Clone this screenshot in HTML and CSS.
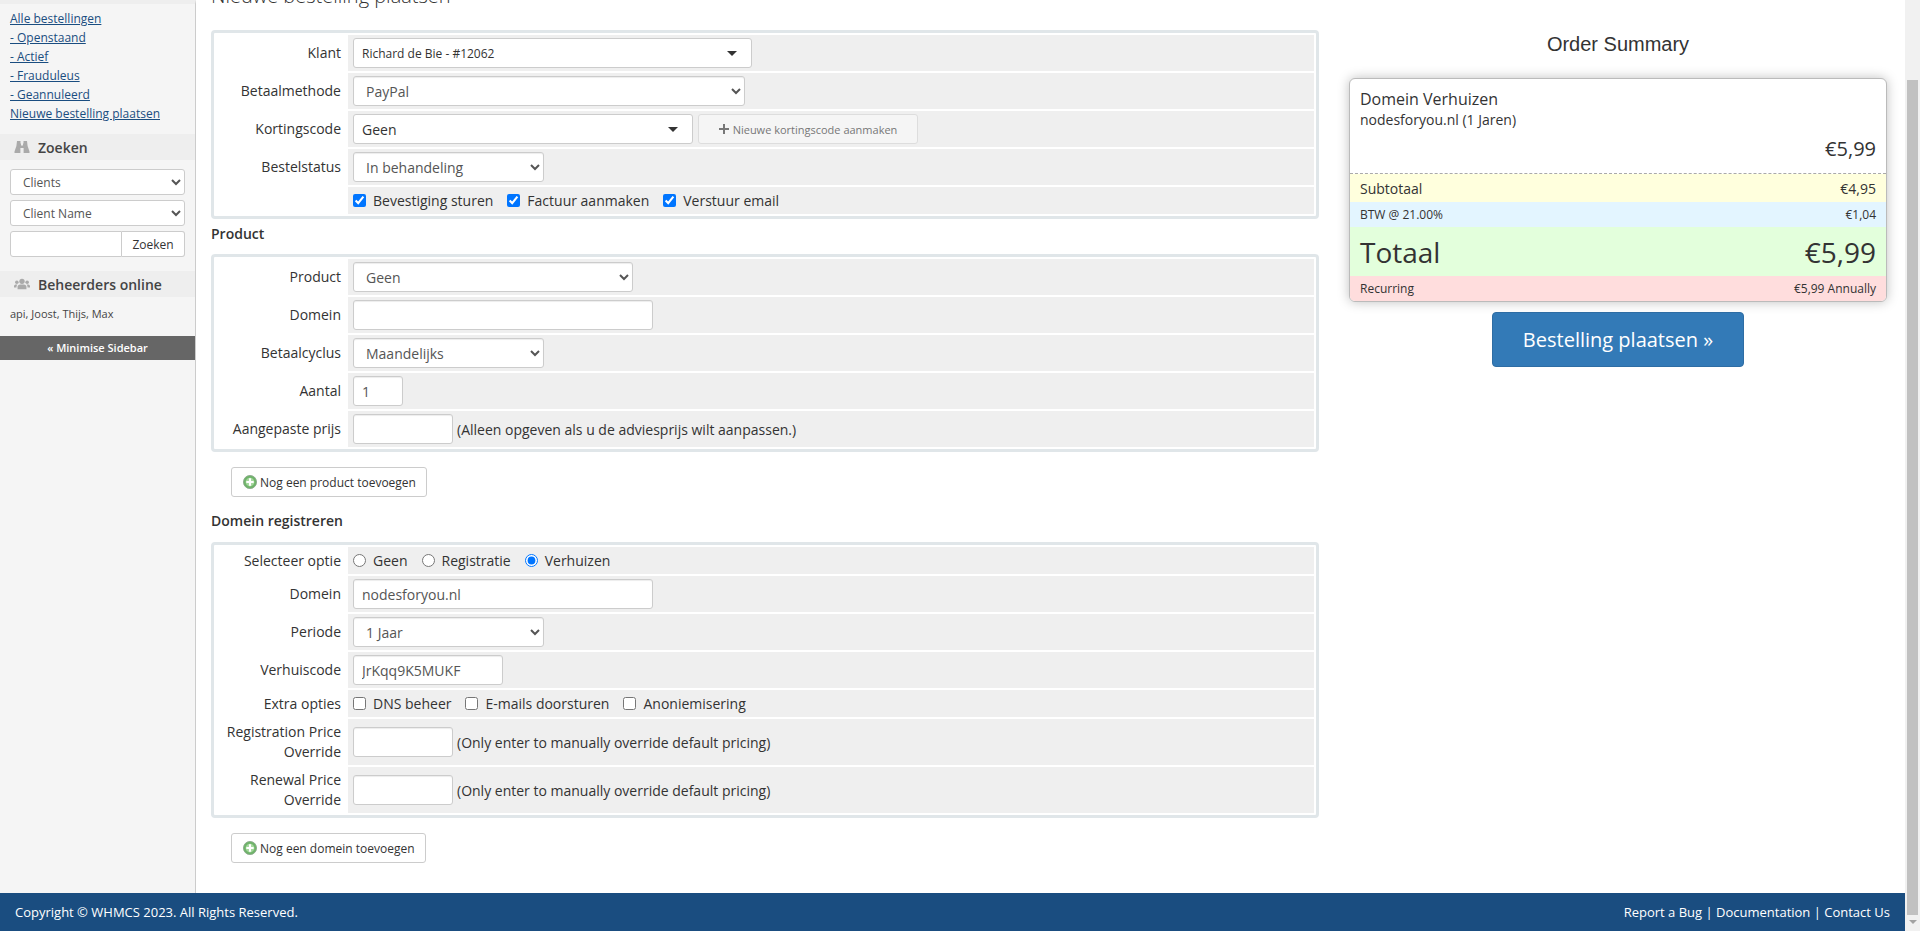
FILE: index.html
```html
<!DOCTYPE html>
<html lang="nl">
<head>
<meta charset="utf-8">
<title>Nieuwe bestelling plaatsen</title>
<link rel="stylesheet" href="styles.css">
</head>
<body>
<div class="window">
  <div class="viewport">
    <div class="columns">
      <aside class="sidebar">
        <ul class="menu">
          <li><a href="#">Alle bestellingen</a></li>
          <li><a href="#">- Openstaand</a></li>
          <li><a href="#">- Actief</a></li>
          <li><a href="#">- Frauduleus</a></li>
          <li><a href="#">- Geannuleerd</a></li>
          <li><a href="#">Nieuwe bestelling plaatsen</a></li>
        </ul>
        <div class="side-head search-head">
          <svg class="side-icon" viewBox="0 0 16 14"><path fill="#aaa" d="M3 1h3.5v2.5H7v2h2v-2h.5V1H13l.6 5 1.9 5.5V13H9.6V8H6.4v5H.5v-1.500L2.400 6z"/></svg>
          <span>Zoeken</span>
        </div>
        <div class="search-form">
          <select class="side-select"><option>Clients</option></select>
          <select class="side-select"><option>Client Name</option></select>
          <div class="search-group">
            <input class="search-input" type="text">
            <button class="search-button" type="button">Zoeken</button>
          </div>
        </div>
        <div class="side-head">
          <svg class="side-icon" viewBox="0 0 18 14"><g fill="#aaa"><circle cx="9" cy="4" r="3"/><path d="M4 13V10c0-1.800 1.500-2.500 5-2.500s5 .7 5 2.500v3z"/><circle cx="3.200" cy="5" r="2"/><circle cx="14.800" cy="5" r="2"/><path d="M0 11V9.500C0 8 1 7.500 3 7.500c.4 0 .7 0 1 .1C3 8.200 2.800 9.500 2.800 11zM18 11V9.500C18 8 17 7.500 15 7.500c-.4 0-.7 0-1 .1 1 .6 1.200 1.900 1.200 3.400z"/></g></svg>
          <span>Beheerders online</span>
        </div>
        <p class="online">api, Joost, Thijs, Max</p>
        <div class="minimise">« Minimise Sidebar</div>
      </aside>

      <main class="content">
        <div class="form-col">
          <h1 class="page-title">Nieuwe bestelling plaatsen</h1>

          <div class="form-table">
            <div class="row">
              <div class="label">Klant</div>
              <div class="field"><div class="fake-select klant"><span>Richard de Bie - #12062</span><i class="caret"></i></div></div>
            </div>
            <div class="row">
              <div class="label">Betaalmethode</div>
              <div class="field"><select class="control w392"><option>PayPal</option></select></div>
            </div>
            <div class="row">
              <div class="label">Kortingscode</div>
              <div class="field">
                <div class="fake-select korting"><span>Geen</span><i class="caret"></i></div>
                <button class="new-code" type="button"><svg class="plus" viewBox="0 0 10 10"><path fill="#777" d="M4 0h2v4h4v2H6v4H4V6H0V4h4z"/></svg>Nieuwe kortingscode aanmaken</button>
              </div>
            </div>
            <div class="row">
              <div class="label">Bestelstatus</div>
              <div class="field"><select class="control w191"><option>In behandeling</option></select></div>
            </div>
            <div class="row short">
              <div class="label"></div>
              <div class="field options">
                <label><input type="checkbox" checked>Bevestiging sturen</label>
                <label><input type="checkbox" checked>Factuur aanmaken</label>
                <label><input type="checkbox" checked>Verstuur email</label>
              </div>
            </div>
          </div>

          <h2 class="section product-title">Product</h2>
          <div class="form-table">
            <div class="row">
              <div class="label">Product</div>
              <div class="field"><select class="control w280"><option>Geen</option></select></div>
            </div>
            <div class="row">
              <div class="label">Domein</div>
              <div class="field"><input class="control w300" type="text"></div>
            </div>
            <div class="row">
              <div class="label">Betaalcyclus</div>
              <div class="field"><select class="control w191"><option>Maandelijks</option></select></div>
            </div>
            <div class="row">
              <div class="label">Aantal</div>
              <div class="field"><input class="control w50" type="text" value="1"></div>
            </div>
            <div class="row">
              <div class="label">Aangepaste prijs</div>
              <div class="field"><input class="control w100" type="text"><span class="hint">(Alleen opgeven als u de adviesprijs wilt aanpassen.)</span></div>
            </div>
          </div>

          <button class="add-button" type="button"><svg class="add-icon" viewBox="0 0 16 16"><circle cx="8" cy="8" r="7.500" fill="#6fb46a" stroke="#8aa88a"/><circle cx="8" cy="8" r="5" fill="#a5d79d"/><path fill="#fff" d="M6.800 3.800h2.400v3h3v2.400h-3v3H6.800v-3h-3V6.800h3z"/></svg>Nog een product toevoegen</button>

          <h2 class="section domain-title">Domein registreren</h2>
          <div class="form-table">
            <div class="row short">
              <div class="label">Selecteer optie</div>
              <div class="field options">
                <label><input type="radio" name="opt">Geen</label>
                <label><input type="radio" name="opt">Registratie</label>
                <label><input type="radio" name="opt" checked>Verhuizen</label>
              </div>
            </div>
            <div class="row">
              <div class="label">Domein</div>
              <div class="field"><input class="control w300" type="text" value="nodesforyou.nl"></div>
            </div>
            <div class="row">
              <div class="label">Periode</div>
              <div class="field"><select class="control w191"><option>1 Jaar</option></select></div>
            </div>
            <div class="row">
              <div class="label">Verhuiscode</div>
              <div class="field"><input class="control w150" type="text" value="JrKqq9K5MUKF"></div>
            </div>
            <div class="row short">
              <div class="label">Extra opties</div>
              <div class="field options">
                <label><input type="checkbox">DNS beheer</label>
                <label><input type="checkbox">E-mails doorsturen</label>
                <label><input type="checkbox">Anoniemisering</label>
              </div>
            </div>
            <div class="row tall">
              <div class="label">Registration Price Override</div>
              <div class="field"><input class="control w100" type="text"><span class="hint">(Only enter to manually override default pricing)</span></div>
            </div>
            <div class="row tall">
              <div class="label">Renewal Price Override</div>
              <div class="field"><input class="control w100" type="text"><span class="hint">(Only enter to manually override default pricing)</span></div>
            </div>
          </div>

          <button class="add-button" type="button"><svg class="add-icon" viewBox="0 0 16 16"><circle cx="8" cy="8" r="7.500" fill="#6fb46a" stroke="#8aa88a"/><circle cx="8" cy="8" r="5" fill="#a5d79d"/><path fill="#fff" d="M6.800 3.800h2.400v3h3v2.400h-3v3H6.800v-3h-3V6.800h3z"/></svg>Nog een domein toevoegen</button>
        </div>

        <div class="summary-col">
          <h2 class="summary-title">Order Summary</h2>
          <div class="summary">
            <div class="sum-item">
              <div class="sum-name">Domein Verhuizen</div>
              <div class="sum-desc">nodesforyou.nl (1 Jaren)</div>
              <div class="sum-price">€5,99</div>
            </div>
            <div class="sum-row subtotal"><span>Subtotaal</span><span>€4,95</span></div>
            <div class="sum-row tax"><span>BTW @ 21.00%</span><span>€1,04</span></div>
            <div class="sum-row total"><span>Totaal</span><span>€5,99</span></div>
            <div class="sum-row recurring"><span>Recurring</span><span>€5,99 Annually</span></div>
          </div>
          <button class="submit" type="button">Bestelling plaatsen »</button>
        </div>
      </main>
    </div>
    <footer class="footer">
      <span>Copyright © WHMCS 2023. All Rights Reserved.</span>
      <span class="foot-links"><a href="#">Report a Bug</a> | <a href="#">Documentation</a> | <a href="#">Contact Us</a></span>
    </footer>
  </div>
  <div class="scrollbar">
    <div class="thumb"></div>
    <i class="arrow-down"></i>
  </div>
</div>
</body>
</html>
```
FILE: styles.css
```css
* { box-sizing: border-box; }
html, body { margin: 0; height: 100%; overflow: hidden; }
body { font-family: "Open Sans", sans-serif; font-size: 14px; color: #333; background: #fff; }
.window { display: flex; height: 931px; }
.viewport { flex: 1; min-width: 0; display: flex; flex-direction: column; }
.columns { flex: 1; min-height: 0; display: flex; overflow: hidden; }

/* sidebar */
.sidebar { width: 196px; flex: none; background: #f5f5f5; border-right: 1px solid #ccc; border-top: 4px solid #eee; }
.menu { list-style: none; margin: 0; padding: 5px 10px 0; font-size: 12px; line-height: 19px; }
.menu a { color: #1a4d80; }
.side-head { height: 26px; margin-top: 11px; background: #eee; display: flex; align-items: center; padding-left: 14px; gap: 8px; font-size: 14px; font-weight: 600; color: #444; }
.side-head + .online { margin-top: 8px; }
.side-icon { width: 16px; height: 14px; flex: none; }
.search-form { padding: 9px 10px 14px; display: flex; flex-direction: column; gap: 5px; margin-bottom: -11px; }
.side-select { width: 175px; height: 26px; font: 12px "Open Sans", sans-serif; color: #555; background: #fff; border: 1px solid #ccc; border-radius: 3px; padding: 0 8px; }
.search-group { display: flex; height: 26px; }
.search-input { width: 112px; border: 1px solid #ccc; border-radius: 3px 0 0 3px; background: #fff; }
.search-button { width: 63px; border: 1px solid #ccc; border-left: 0; border-radius: 0 3px 3px 0; background: #fff; font: 12px "Open Sans", sans-serif; color: #333; padding: 0; }
.online { margin: 0; padding: 0 10px; font-size: 11px; line-height: 18px; color: #444; }
.minimise { margin-top: 13px; height: 24px; background: #666; color: #fff; font-size: 11px; font-weight: 600; line-height: 24px; text-align: center; }

/* main */
.content { flex: 1; min-width: 0; display: flex; padding-left: 15px; }
.form-col { width: 1108px; flex: none; margin-top: -19px; }
.page-title { margin: 0 0 20px; font-size: 20px; font-weight: 300; line-height: 29px; color: #333; }
.section { margin: 0; font-size: 14px; font-weight: 600; line-height: 19px; color: #333; }
.product-title { padding: 5px 0 11px; }
.domain-title { padding: 14px 0 12px; }

.form-table { border: 3px solid #e0e6e9; border-radius: 4px; padding: 2px; display: flex; flex-direction: column; gap: 2px; }
.row { display: flex; gap: 2px; height: 36px; }
.row.short { height: 27px; }
.row.tall { height: 46px; }
.label { width: 130px; flex: none; padding: 0 5px 0 0; text-align: right; align-self: center; line-height: 20px; color: #333; }
.field { flex: 1; min-width: 0; background: #efefef; padding: 0 5px; display: flex; align-items: center; }

.control { height: 30px; font: 14px "Open Sans", sans-serif; color: #555; background: #fff; border: 1px solid #ccc; border-radius: 3px; box-shadow: inset 0 1px 1px rgba(0,0,0,.075); padding: 0 8px; }
select.control { padding: 0 8px; }
.w392 { width: 392px; }
.w191 { width: 191px; }
.w280 { width: 280px; }
.w300 { width: 300px; }
.w50 { width: 50px; }
.w100 { width: 100px; }
.w150 { width: 150px; }
.fake-select { height: 30px; background: #fff; border: 1px solid #ccc; border-radius: 3px; display: flex; align-items: center; justify-content: space-between; padding: 0 14px 0 8px; color: #333; }
.fake-select.klant { width: 399px; font-size: 12px; }
.fake-select.korting { width: 340px; }
.caret { width: 0; height: 0; border: 5px solid transparent; border-top: 5px solid #333; border-bottom: 0; }
.new-code { margin-left: 5px; width: 220px; height: 30px; background: #f5f5f5; border: 1px solid #ddd; border-radius: 3px; font: 11px "Open Sans", sans-serif; color: #777; padding: 0; display: flex; align-items: center; justify-content: center; gap: 4px; }
.plus { width: 10px; height: 10px; }
.hint { margin-left: 4px; }
.options { gap: 14px; }
.options label { display: flex; align-items: center; }
.options input { width: 13px; height: 13px; margin: 0 7px 0 0; }

.add-button { display: flex; align-items: center; gap: 3px; height: 30px; margin: 15px 0 0 20px; padding: 0 10px 0 11px; background: #fff; border: 1px solid #ccc; border-radius: 3px; font: 12px "Open Sans", sans-serif; color: #333; }
.add-icon { width: 14px; height: 14px; }

/* summary */
.summary-col { flex: 1; padding: 30px 18px 0 30px; min-width: 0; display: flex; flex-direction: column; align-items: center; }
.summary-title { margin: 0; font: 400 20px/28px "Liberation Sans", sans-serif; color: #333; }
.summary { width: 100%; margin-top: 20px; background: #fff; border: 1px solid #bbb; border-radius: 6px; box-shadow: 0 0 12px rgba(0,0,0,.25); overflow: hidden; }
.sum-item { height: 95px; padding: 9px 10px 0; border-bottom: 1px dashed #aaa; }
.sum-name { font-size: 16px; line-height: 22px; }
.sum-desc { font-size: 14px; line-height: 20px; }
.sum-price { font-size: 20px; line-height: 28px; text-align: right; margin-top: 5px; }
.sum-row { display: flex; justify-content: space-between; align-items: center; padding: 0 10px; }
.subtotal { height: 28px; background: #ffd; font-size: 14px; }
.tax { height: 25px; background: #e3f5ff; font-size: 12px; }
.total { height: 49px; background: #e3ffdc; font-size: 28px; }
.recurring { height: 25px; background: #ffdddd; font-size: 12px; }
.submit { margin-top: 10px; width: 252px; height: 55px; background: #337ab7; border: 1px solid #2e6da4; border-radius: 4px; color: #fff; font: 20px "Open Sans", sans-serif; padding: 0; }

/* footer */
.footer { height: 38px; flex: none; background: #1a4d80; color: #fff; font-size: 13px; display: flex; align-items: center; justify-content: space-between; padding: 0 15px; }
.footer a { color: #fff; text-decoration: none; }

/* scrollbar */
.scrollbar { width: 15px; flex: none; background: #f1f1f1; display: flex; flex-direction: column; align-items: center; padding: 80px 2px 0; }
.thumb { width: 100%; height: 835px; background: #c1c1c1; }
.arrow-down { margin-top: 5px; width: 0; height: 0; border: 4px solid transparent; border-top: 4px solid #a3a3a3; border-bottom: 0; }
```
